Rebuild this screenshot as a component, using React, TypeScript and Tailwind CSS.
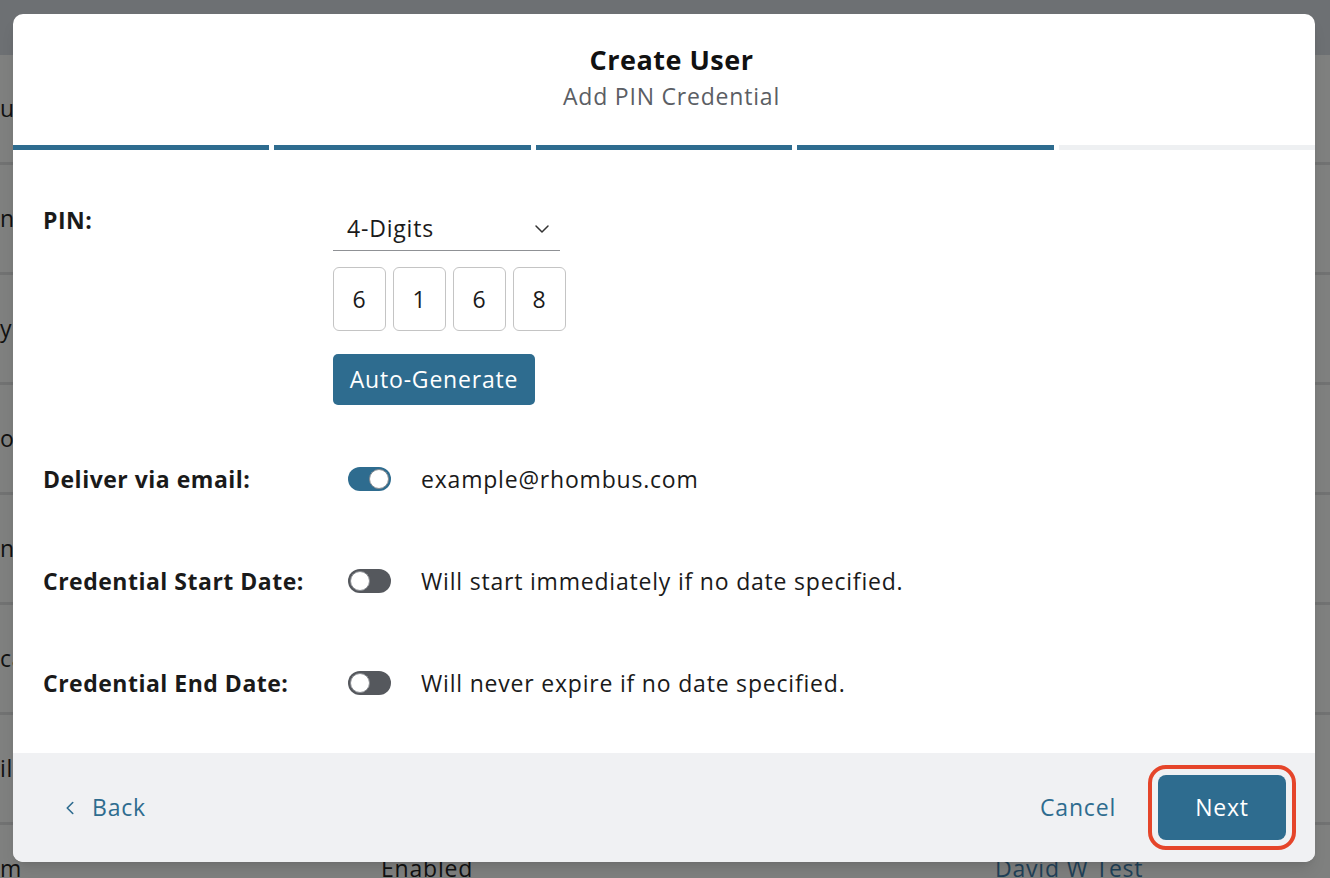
import { ChevronDown, ChevronLeft } from "lucide-react";

const font = { fontFamily: "'Open Sans', Lato, sans-serif" };

interface ToggleProps {
  on: boolean;
}

function Toggle({ on }: ToggleProps) {
  return (
    <div
      className={`w-[43px] h-[24px] rounded-full flex items-center px-[2px] ${
        on ? "bg-[#2e6c8f] justify-end" : "bg-[#55585d] justify-start"
      }`}
    >
      <div className="w-[20px] h-[20px] rounded-full bg-white border border-[#8a8d92]" />
    </div>
  );
}

const bgRows = ["urs", "na", "y", "ou", "na", "ca", "il"];

export default function App() {
  const pin = ["6", "1", "6", "8"];

  return (
    <div className="relative w-full h-[878px] overflow-hidden bg-[#7f807f] text-[23px] tracking-[0.8px]" style={font}>
      {/* Page behind the dialog, dimmed */}
      <div className="h-[55px] bg-[#6d7073]" />
      {bgRows.map((t, i) => (
        <div key={i} className="h-[110px] border-b-[3px] border-[#717272] flex items-center text-[#111]">
          <span>{t}</span>
        </div>
      ))}
      <div className="h-[110px] flex items-start pt-[26px] text-[#111]">
        <span className="w-[381px]">m</span>
        <span className="w-[614px]">Enabled</span>
        <span className="text-[#1f4158]">David W Test</span>
      </div>

      {/* Dialog */}
      <div className="absolute left-[13px] top-[14px] w-[1302px] h-[848px] rounded-[10px] overflow-hidden bg-white flex flex-col shadow-lg">
        <div className="h-[131px] flex flex-col items-center pt-[29px] pl-[15px]">
          <h1 className="text-[27px] leading-[34px] font-bold tracking-[0.5px] text-[#111]">Create User</h1>
          <p className="mt-[4px] text-[23px] leading-[30px] text-[#5b5e64]">Add PIN Credential</p>
        </div>
        <div className="flex gap-[5px] h-[5px]">
          <div className="flex-1 bg-[#2e6c8f]" />
          <div className="flex-1 bg-[#2e6c8f]" />
          <div className="flex-1 bg-[#2e6c8f]" />
          <div className="flex-1 bg-[#2e6c8f]" />
          <div className="flex-1 bg-[#eef0f2]" />
        </div>

        <div className="flex-1 pl-[30px] text-[#1a1a1a]">
          {/* PIN */}
          <div className="flex pt-[55px]">
            <div className="w-[290px] font-bold tracking-[0.5px] leading-[30px]">PIN:</div>
            <div className="flex flex-col">
              <div className="w-[227px] h-[44px] border-b border-[#8f9195] flex items-center justify-between pl-[14px] pr-[6px] mt-[2px]">
                <span>4-Digits</span>
                <ChevronDown className="w-[24px] h-[24px] text-[#333]" strokeWidth={1.5} />
              </div>
              <div className="flex gap-[7px] mt-[16px]">
                {pin.map((d, i) => (
                  <div
                    key={i}
                    className="w-[53px] h-[64px] rounded-[6px] border border-[#c4c4c4] flex items-center justify-center"
                  >
                    {d}
                  </div>
                ))}
              </div>
              <button className="mt-[23px] w-[202px] h-[51px] rounded-[5px] bg-[#2e6c8f] text-white">
                Auto-Generate
              </button>
            </div>
          </div>

          {/* Delivery + dates */}
          <div className="mt-[23px]">
            <div className="h-[102px] flex items-center">
              <div className="w-[290px] font-bold tracking-[0.5px]">Deliver via email:</div>
              <div className="pl-[15px]">
                <Toggle on />
              </div>
              <span className="ml-[30px]">example@rhombus.com</span>
            </div>
            <div className="h-[102px] flex items-center">
              <div className="w-[290px] font-bold tracking-[0.5px]">Credential Start Date:</div>
              <div className="pl-[15px]">
                <Toggle on={false} />
              </div>
              <span className="ml-[30px]">Will start immediately if no date specified.</span>
            </div>
            <div className="h-[102px] flex items-center">
              <div className="w-[290px] font-bold tracking-[0.5px]">Credential End Date:</div>
              <div className="pl-[15px]">
                <Toggle on={false} />
              </div>
              <span className="ml-[30px]">Will never expire if no date specified.</span>
            </div>
          </div>
        </div>

        {/* Footer */}
        <div className="h-[109px] bg-[#f0f1f3] flex items-center justify-between pl-[46px] pr-[29px]">
          <button className="flex items-center gap-[11px] text-[#2e6c8f]">
            <ChevronLeft className="w-[22px] h-[22px]" strokeWidth={1.75} />
            <span>Back</span>
          </button>
          <div className="flex items-center gap-[42px]">
            <button className="text-[#2e6c8f]">Cancel</button>
            <button className="w-[128px] h-[65px] rounded-[8px] bg-[#2e6c8f] text-white outline-[4px] outline-solid outline-[#e5452a] outline-offset-[6px]">
              Next
            </button>
          </div>
        </div>
      </div>
    </div>
  );
}
